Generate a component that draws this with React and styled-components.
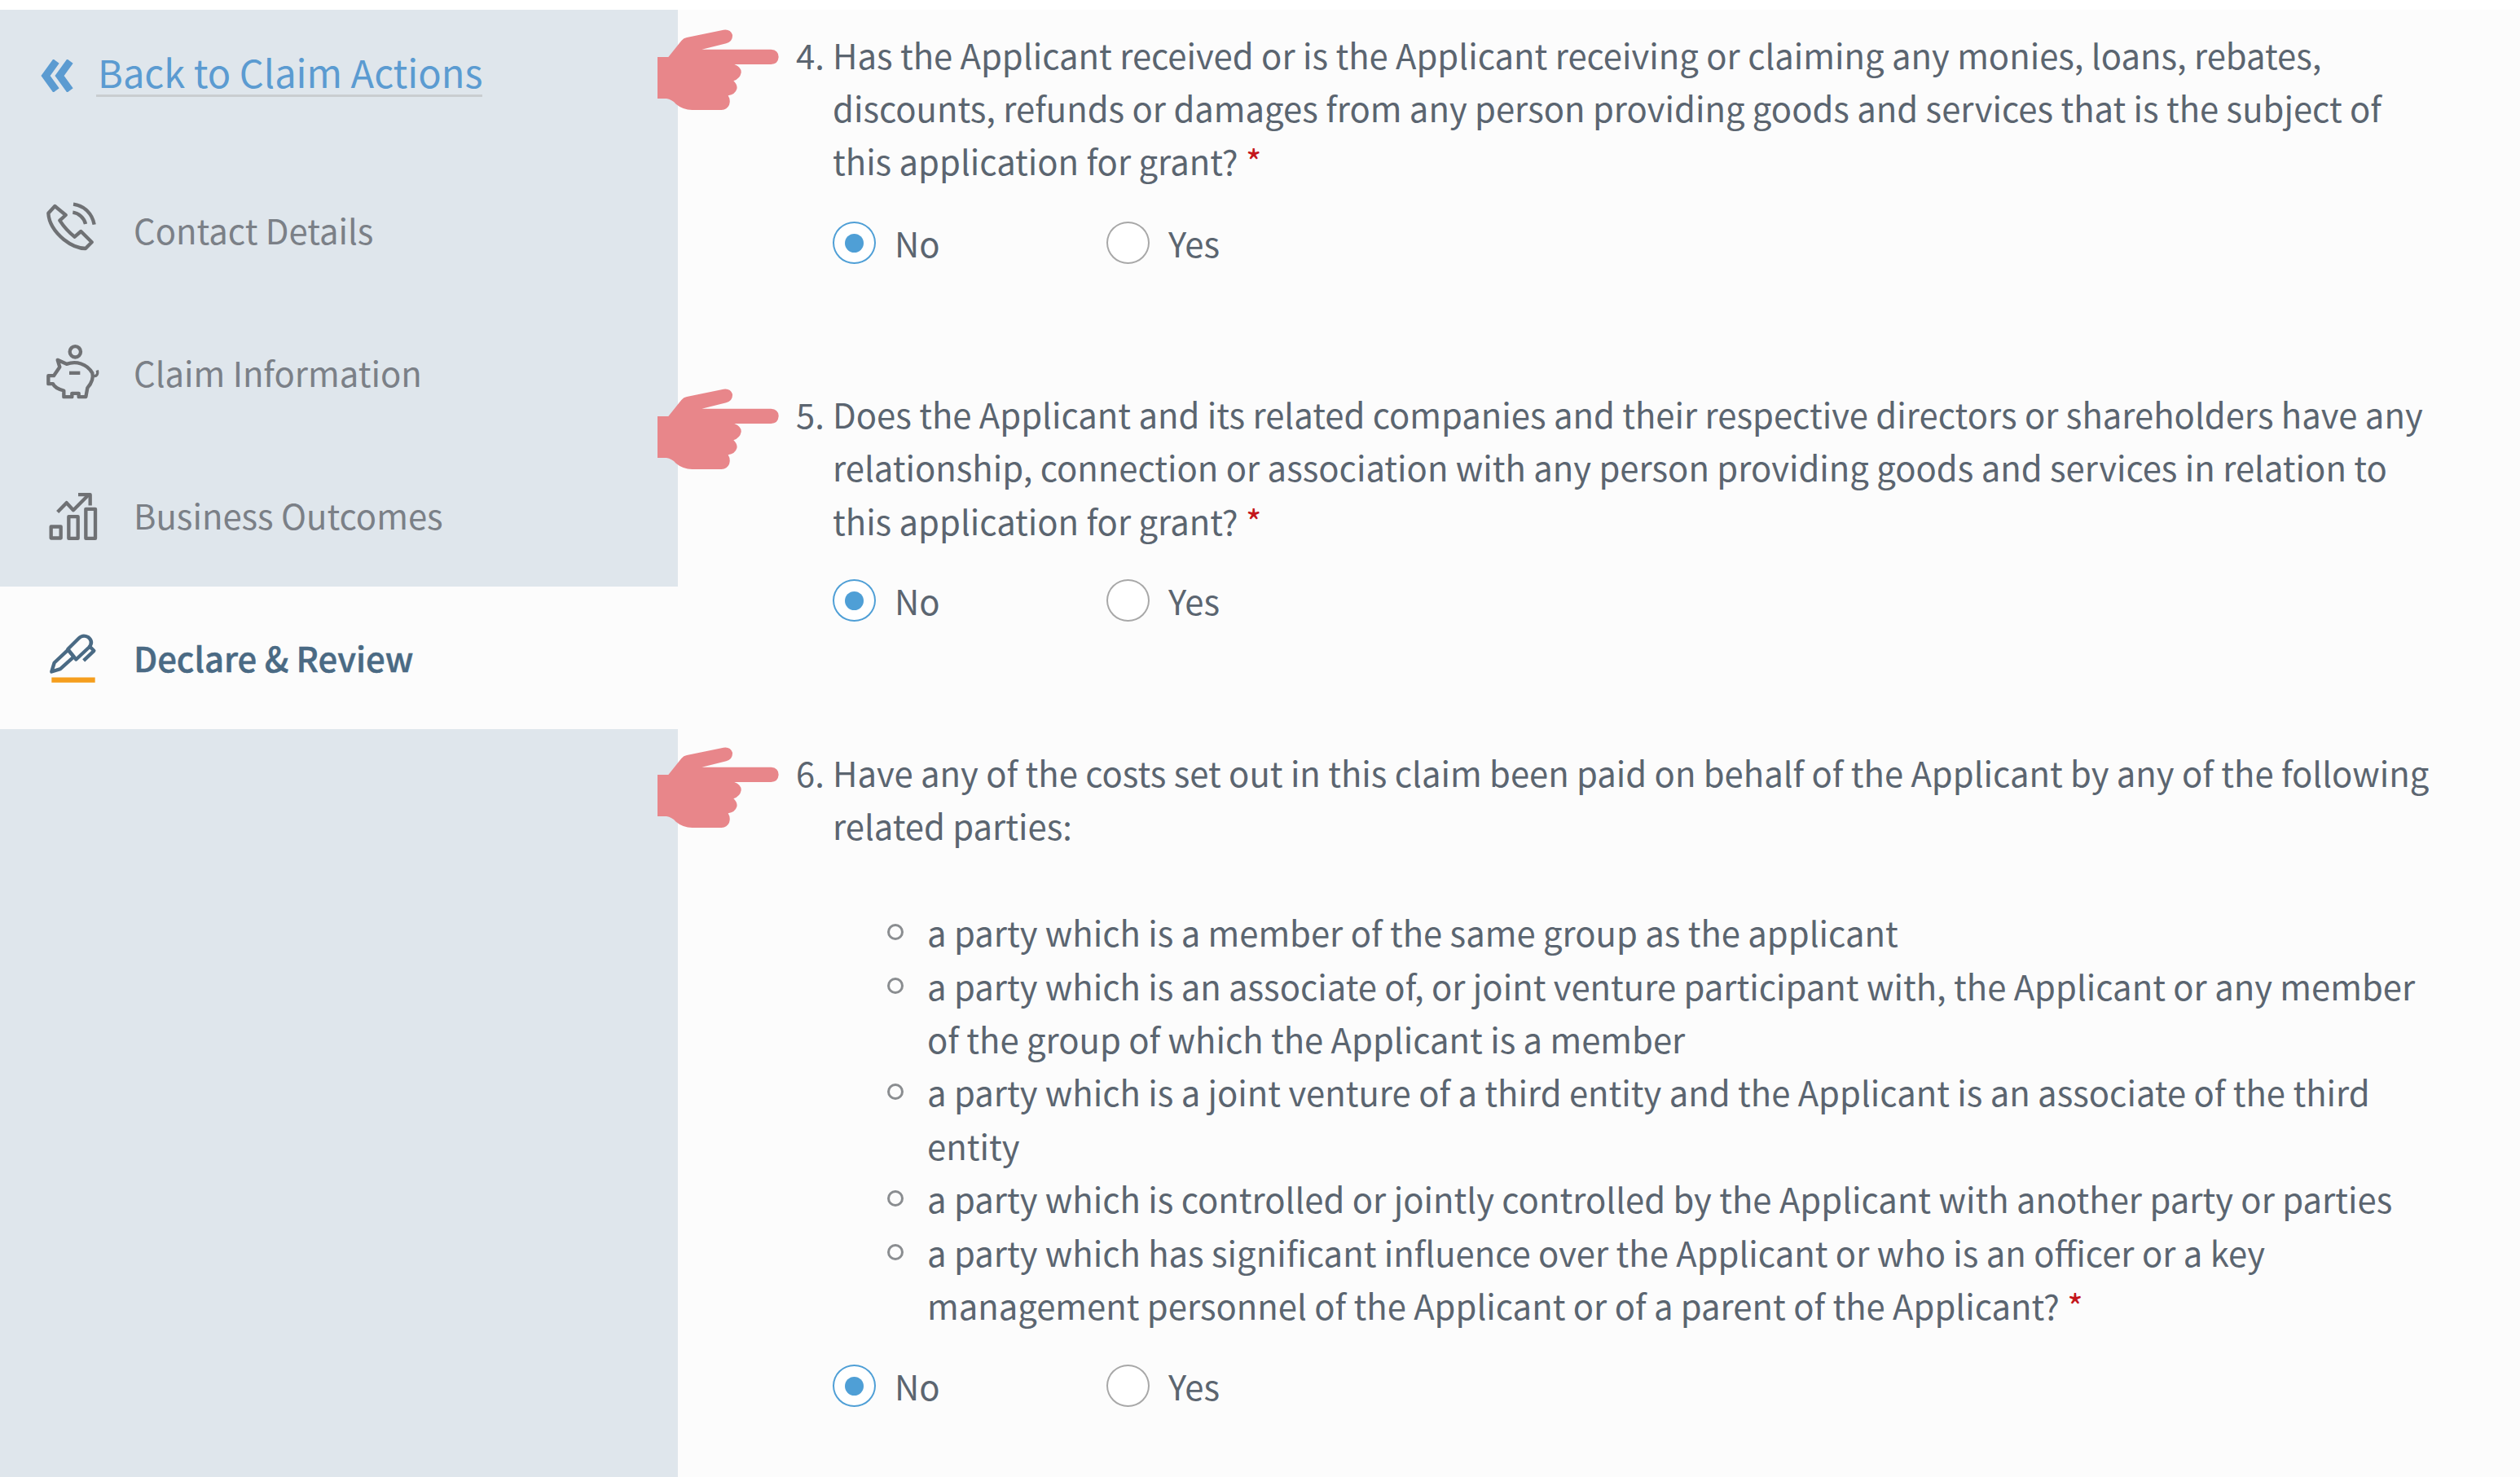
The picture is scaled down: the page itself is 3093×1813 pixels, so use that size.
import React from "react";
import styled, { createGlobalStyle } from "styled-components";

const GlobalStyle = createGlobalStyle`
  html, body {
    margin: 0;
    padding: 0;
    background: #ffffff;
  }
  body {
    font-family: "Noto Sans CJK SC", "Noto Sans", sans-serif;
    overflow: hidden;
  }
`;

const Page = styled.div`
  width: 3093px;
  height: 1813px;
  padding-top: 12px;
  box-sizing: border-box;
  overflow: hidden;
  display: grid;
  grid-template-columns: 832px 1fr;
`;

const Sidebar = styled.aside`
  background: #dfe6ec;
  display: flex;
  flex-direction: column;
`;

const BackRow = styled.div`
  height: 183px;
  box-sizing: border-box;
  padding: 61px 0 0 50px;
  display: flex;
  align-items: flex-start;
  gap: 28px;
`;

const BackLink = styled.a`
  font-size: 47px;
  line-height: 50px;
  height: 49px;
  color: #5b9bd1;
  border-bottom: 3px solid #c9cdd0;
  padding: 0 0 4px 2px;
  margin-top: -10px;
  text-decoration: none;
`;

const NavItem = styled.div`
  height: 175px;
  box-sizing: border-box;
  padding-left: 50px;
  display: flex;
  align-items: center;
  gap: 34px;
  background: ${(p) => (p.$active ? "#fcfcfc" : "transparent")};
  color: ${(p) => (p.$active ? "#4a6a84" : "#7b8087")};
  font-weight: ${(p) => (p.$active ? 500 : 400)};
  -webkit-text-stroke: ${(p) => (p.$active ? "0.5px" : "0")};
  font-size: 41.8px;
  line-height: 60px;
  padding-bottom: 1px;
`;

const NavIcon = styled.svg`
  width: 80px;
  height: 80px;
  flex: none;
  fill: none;
  stroke: ${(p) => p.$color || "#6f7174"};
  stroke-width: 13;
  stroke-linejoin: round;
`;

const Main = styled.main`
  background: #fcfcfc;
  padding: 22.5px 90px 0 144px;
  color: #5b6570;
  font-size: 41.8px;
  line-height: 65.4px;
`;

const Question = styled.section`
  position: relative;
  display: grid;
  grid-template-columns: 46px 1fr;
  margin-bottom: ${(p) => p.$gap}px;
`;

const HandWrap = styled.svg`
  position: absolute;
  left: -169px;
  top: 1px;
  width: 150px;
  height: 100px;
`;

const Num = styled.span`
  padding-left: 1px;
`;

const Body = styled.div`
  grid-column: 2;
`;

const Text = styled.p`
  margin: 0;
`;

const Star = styled.span`
  color: #c4161c;
`;

const Parties = styled.ul`
  list-style: none;
  margin: 65.4px 0 0;
  padding: 0 0 0 116px;
`;

const Party = styled.li`
  position: relative;
  &::before {
    content: "";
    position: absolute;
    left: -49px;
    top: 22px;
    width: 14px;
    height: 14px;
    border: 3px solid #8a8d90;
    border-radius: 50%;
  }
`;

const RadioRow = styled.div`
  display: flex;
  margin-top: ${(p) => p.$top}px;
  height: 52px;
`;

const RadioOption = styled.label`
  width: 336px;
  display: flex;
  align-items: center;
  gap: 23px;
  line-height: 52px;
`;

const RadioMark = styled.span`
  width: 53px;
  height: 52px;
  box-sizing: border-box;
  border-radius: 50%;
  border: 2px solid ${(p) => (p.$on ? "#4f9fd6" : "#a8a8a8")};
  display: flex;
  align-items: center;
  justify-content: center;
  background: #ffffff;
  &::after {
    content: "";
    display: ${(p) => (p.$on ? "block" : "none")};
    width: 23px;
    height: 23px;
    border-radius: 50%;
    background: #4f9fd6;
  }
`;

const Hand = () => (
  <HandWrap viewBox="82 110 450 300">
    <path
      fill="#e8868a"
      d="M82 212H122L170 152Q178 142 190 140L325 112Q350 108 358 130Q360 155 335 162L245 184H500Q528 186 528 212Q526 238 500 239H365Q392 250 390 270Q386 292 362 300Q378 315 374 330Q368 350 342 354Q352 370 346 388Q338 406 318 407H210Q175 406 150 385Q135 368 115 365H82Z"
    />
  </HandWrap>
);

const Chevrons = () => (
  <svg width="40" height="40" viewBox="0 0 40 40" fill="none" stroke="#5b9bd1" strokeWidth="9">
    <path d="M19 2L6 20L19 38" />
    <path d="M36 2L23 20L36 38" />
  </svg>
);

const PhoneIcon = () => (
  <NavIcon viewBox="0 9 240 240">
    <path d="M52 42L28 68C30 105 55 140 85 165C110 185 140 198 165 198L188 175L148 135L125 155C105 140 85 118 70 95L92 75Z" />
    <path d="M120 35C160 40 190 70 197 110" />
    <path d="M118 65C140 68 160 85 165 108" />
  </NavIcon>
);

const PiggyIcon = () => (
  <NavIcon viewBox="0 7.5 240 240">
    <circle cx="127" cy="52" r="20" />
    <path d="M62 82L95 97C130 85 170 95 190 130C195 150 190 165 172 185L166 218H140V205H115V218H85V195C65 190 50 182 45 170H28V140H48L70 108Z" />
    <path d="M105 130H145" />
    <path d="M190 140C205 145 212 135 208 120" strokeWidth="10" />
  </NavIcon>
);

const ChartIcon = () => (
  <NavIcon viewBox="0 -7.5 240 240">
    <rect x="38" y="156" width="36" height="42" />
    <rect x="103" y="119" width="34" height="80" />
    <rect x="166" y="91" width="35" height="108" />
    <path d="M62 102L95 68L120 95L175 40" />
    <path d="M138 38H182V78" />
  </NavIcon>
);

const PenIcon = () => (
  <NavIcon viewBox="0 -7.5 240 240" $color="#4a6a84">
    <path d="M40 165L50 132L100 85L122 110L72 155Z" />
    <path d="M100 82L140 42Q155 27 175 38Q195 55 178 75L130 120Z" />
    <path d="M178 70L196 88L158 124" />
    <rect x="40" y="186" width="160" height="19" fill="#f59e1e" stroke="none" />
  </NavIcon>
);

const radios = (top) => (
  <RadioRow $top={top}>
    <RadioOption>
      <RadioMark $on />
      No
    </RadioOption>
    <RadioOption>
      <RadioMark />
      Yes
    </RadioOption>
  </RadioRow>
);

function App() {
  return (
    <>
      <GlobalStyle />
      <Page>
        <Sidebar>
          <BackRow>
            <Chevrons />
            <BackLink>Back to Claim Actions</BackLink>
          </BackRow>
          <NavItem>
            <PhoneIcon />
            Contact Details
          </NavItem>
          <NavItem>
            <PiggyIcon />
            Claim Information
          </NavItem>
          <NavItem>
            <ChartIcon />
            Business Outcomes
          </NavItem>
          <NavItem $active>
            <PenIcon />
            Declare &amp; Review
          </NavItem>
        </Sidebar>
        <Main>
          <Question $gap={152}>
            <Hand />
            <Num>4.</Num>
            <Body>
              <Text>
                Has the Applicant received or is the Applicant receiving or claiming any monies, loans, rebates,
                discounts, refunds or damages from any person providing goods and services that is the subject of
                this application for grant? <Star>*</Star>
              </Text>
              {radios(41.3)}
            </Body>
          </Question>
          <Question $gap={153}>
            <Hand />
            <Num>5.</Num>
            <Body>
              <Text>
                Does the Applicant and its related companies and their respective directors or shareholders have any
                relationship, connection or association with any person providing goods and services in relation to
                this application for grant? <Star>*</Star>
              </Text>
              {radios(38.8)}
            </Body>
          </Question>
          <Question $gap={0}>
            <Hand />
            <Num>6.</Num>
            <Body>
              <Text>
                Have any of the costs set out in this claim been paid on behalf of the Applicant by any of the following
                related parties:
              </Text>
              <Parties>
                <Party>a party which is a member of the same group as the applicant</Party>
                <Party>
                  a party which is an associate of, or joint venture participant with, the Applicant or any member of
                  the group of which the Applicant is a member
                </Party>
                <Party>
                  a party which is a joint venture of a third entity and the Applicant is an associate of the third
                  entity
                </Party>
                <Party>a party which is controlled or jointly controlled by the Applicant with another party or parties</Party>
                <Party>
                  a party which has significant influence over the Applicant or who is an officer or a key management
                  personnel of the Applicant or of a parent of the Applicant? <Star>*</Star>
                </Party>
              </Parties>
              {radios(40)}
            </Body>
          </Question>
        </Main>
      </Page>
    </>
  );
}

export default App;
